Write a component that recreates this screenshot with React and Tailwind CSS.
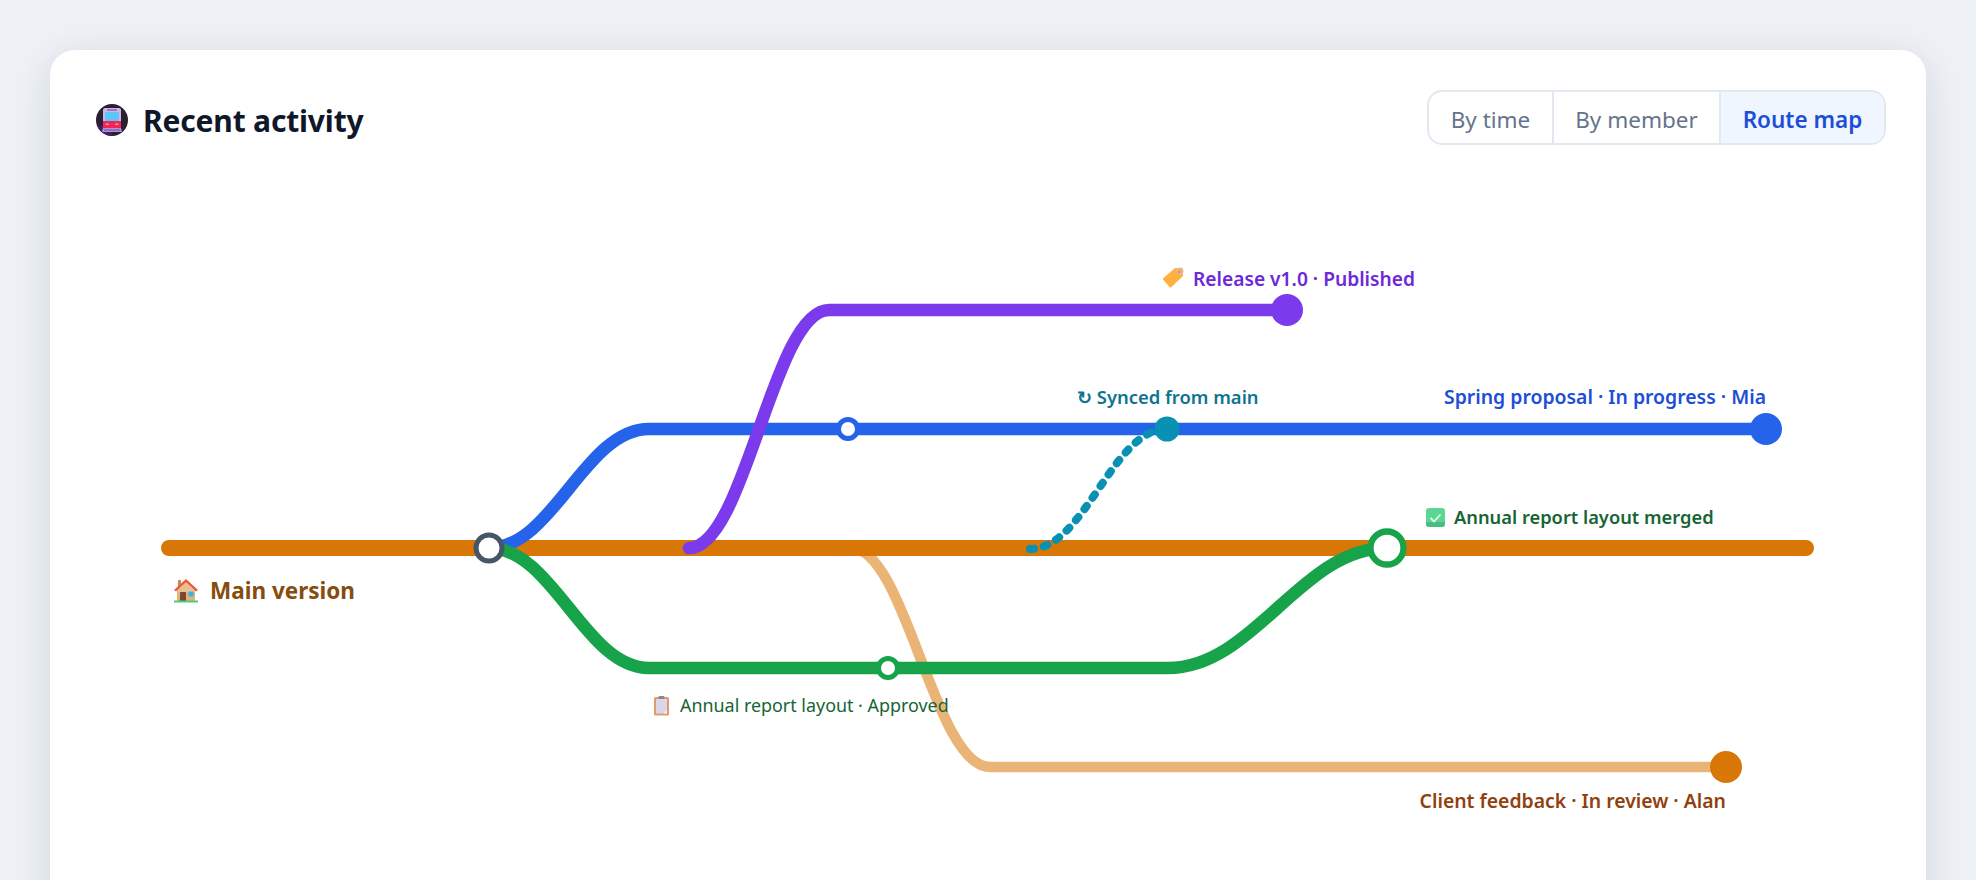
import { useState } from 'react'

const FONT = "font-['Noto_Sans',sans-serif]"

// Route geometry is in page pixels; the svg viewBox starts where the chart sits.
const routes = [
  { d: 'M169 548 H1806', cls: 'stroke-[#d97706]', w: 16 },
  { d: 'M851 548 C906 548 934 767 990 767 H1726', cls: 'stroke-[#d97706]', w: 10.5, op: 0.55 },
  { d: 'M489 548 C553 548 585 429 649 429 H1766', cls: 'stroke-[#2563eb]', w: 12.6 },
  { d: 'M489 548 C553 548 585 668 649 668 H1168 C1254 668 1301 548 1387 548', cls: 'stroke-[#16a34a]', w: 12.6 },
  { d: 'M689 548 C745 548 773 310 829 310 H1287', cls: 'stroke-[#7c3aed]', w: 12.6 },
  { d: 'M1030 549 C1085 549 1112 429 1167 429', cls: 'stroke-[#0891b2]', w: 8, dash: '4 10' },
]

const dots = [
  { x: 1287, y: 310, r: 16, cls: 'fill-[#7c3aed]' },
  { x: 1766, y: 429, r: 16, cls: 'fill-[#2563eb]' },
  { x: 1726, y: 767, r: 16, cls: 'fill-[#d97706]' },
  { x: 1167, y: 429, r: 12.6, cls: 'fill-[#0891b2]' },
]

const rings = [
  { x: 489, y: 548, r: 13, w: 5, cls: 'stroke-[#475569]' },
  { x: 848, y: 429, r: 9.5, w: 5, cls: 'stroke-[#2563eb]' },
  { x: 888, y: 668, r: 9.5, w: 5, cls: 'stroke-[#16a34a]' },
  { x: 1387, y: 548, r: 16.5, w: 6.3, cls: 'stroke-[#16a34a]' },
]

const labels = [
  { x: 210, y: 598.5, text: 'Main version', cls: 'text-[22.5px] font-bold fill-[#854d0e]' },
  { x: 1193, y: 285.5, text: 'Release v1.0 · Published', cls: 'text-[19.2px] font-semibold fill-[#6d28d9]' },
  { x: 1077, y: 404, text: '↻ Synced from main', cls: 'text-[18.4px] font-semibold fill-[#0e7490]' },
  { x: 1766, y: 404, text: 'Spring proposal · In progress · Mia', cls: 'text-[19.4px] font-semibold fill-[#1d4ed8]', end: true },
  { x: 1454, y: 524, text: 'Annual report layout merged', cls: 'text-[18.3px] font-semibold fill-[#166534]' },
  { x: 680, y: 711.5, text: 'Annual report layout · Approved', cls: 'text-[17.9px] fill-[#166534]' },
  { x: 1726, y: 807.5, text: 'Client feedback · In review · Alan', cls: 'text-[19.4px] font-semibold fill-[#92400e]', end: true },
]

function TrainIcon() {
  return (
    <svg viewBox="0 0 32 32" className="w-8 h-8 shrink-0">
      <circle cx="16" cy="16" r="16" fill="#2a2030" />
      <path d="M0 16a16 16 0 0 0 16 16V22H1z" fill="#4a1f73" opacity="0.8" />
      <rect x="7" y="4" width="18" height="15" rx="2" fill="#cdb4ec" />
      <rect x="11" y="5.5" width="10" height="1" fill="#5c4a72" />
      <rect x="9" y="8" width="14" height="9.5" rx="1.5" fill="#5bc6f5" />
      <rect x="7" y="17" width="18" height="7" fill="#f0245f" />
      <rect x="9.5" y="19.5" width="3.5" height="1.6" rx="0.8" fill="#ffb02e" />
      <rect x="19" y="19.5" width="3.5" height="1.6" rx="0.8" fill="#ffb02e" />
      <path d="M7 24h18l1 4H6z" fill="#b48fdc" />
      <rect x="8" y="25.5" width="16" height="1" fill="#6d5a85" />
    </svg>
  )
}

function HouseEmoji({ x, y }) {
  return (
    <g transform={`translate(${x} ${y})`}>
      <rect x="3" y="10" width="18" height="14" fill="#e3b27c" />
      <rect x="4" y="2" width="3" height="7" fill="#c98a55" />
      <path d="M12 1 L24 12 L22 13.5 L12 4.5 L2 13.5 L0 12 Z" fill="#ea5b3a" />
      <path d="M12 4.5 L21 12.5 V14 H3 V12.5 Z" fill="#eac092" />
      <rect x="6" y="14" width="6" height="9.5" rx="1" fill="#7d4533" />
      <rect x="14.5" y="13.5" width="5" height="5" fill="#37b4f0" />
      <rect x="0" y="22.5" width="24" height="2" fill="#4ccc77" />
    </g>
  )
}

function TagEmoji({ x, y }) {
  return (
    <g transform={`translate(${x} ${y})`}>
      <path d="M13 1 L20 1 Q21 1 21 2 L21 9 L9.5 20 Q8.5 21 7.5 20 L1 12.5 Q0.5 11.5 1.5 11 Z" fill="#ffb13d" />
      <circle cx="16.5" cy="5.5" r="2" fill="#f8857d" />
      <circle cx="18" cy="4" r="3.2" fill="none" stroke="#cfc6e0" strokeWidth="1" />
    </g>
  )
}

function CheckEmoji({ x, y }) {
  return (
    <g transform={`translate(${x} ${y})`}>
      <rect x="0" y="0" width="19" height="19" rx="3" fill="#5bd693" />
      <path d="M0 14 V16 Q0 19 3 19 H16 Q19 19 19 16 V14 Z" fill="#3fae72" opacity="0.6" />
      <path d="M4.5 10 L8 13.5 L14.5 6.5" fill="none" stroke="#eafaf1" strokeWidth="1.8" />
    </g>
  )
}

function ClipboardEmoji({ x, y }) {
  return (
    <g transform={`translate(${x} ${y})`}>
      <rect x="0" y="1" width="15" height="18.5" rx="1.5" fill="#e09a6c" />
      <rect x="2" y="3" width="11" height="14.5" fill="#dcd7e8" />
      <rect x="4.5" y="0" width="6" height="3" rx="1" fill="#8a8494" />
      <path d="M9.5 17.5 L13 14 V17.5 Z" fill="#f4f1f8" />
    </g>
  )
}

function RouteMap() {
  return (
    <svg viewBox="50 145 1876 735" className="block w-[1876px] h-[735px]" fill="none">
      {routes.map((r) => (
        <path
          key={r.d}
          d={r.d}
          className={r.cls}
          strokeWidth={r.w}
          strokeLinecap="round"
          strokeLinejoin="round"
          strokeOpacity={r.op}
          strokeDasharray={r.dash}
        />
      ))}
      {dots.map((c) => (
        <circle key={c.x} cx={c.x} cy={c.y} r={c.r} className={c.cls} />
      ))}
      {rings.map((c) => (
        <circle key={c.x} cx={c.x} cy={c.y} r={c.r} strokeWidth={c.w} className={`fill-white ${c.cls}`} />
      ))}
      <HouseEmoji x={174} y={578} />
      <TagEmoji x={1162} y={267} />
      <CheckEmoji x={1426} y={508} />
      <ClipboardEmoji x={654} y={696} />
      {labels.map((l) => (
        <text key={l.text} x={l.x} y={l.y} textAnchor={l.end ? 'end' : 'start'} className={l.cls}>
          {l.text}
        </text>
      ))}
    </svg>
  )
}

export default function App() {
  const [view, setView] = useState('Route map')
  const tabs = [
    { name: 'By time', w: 'w-[125px]' },
    { name: 'By member', w: 'w-[167px]' },
    { name: 'Route map', w: 'w-[163px]' },
  ]

  return (
    <div className={`h-screen overflow-hidden bg-[#eef2f7] pt-[50px] px-[50px] ${FONT}`}>
      <div className="h-[900px] bg-white rounded-[25px] shadow-[0_8px_40px_rgba(15,23,42,0.12)]">
        <header className="flex items-center justify-between pl-[46px] pr-[40px] pt-[40px]">
          <div className="flex items-center gap-[15px] pt-[5px]">
            <TrainIcon />
            <h1 className="pt-[1px] text-[30px] leading-[45px] font-bold tracking-[-0.17px] text-[#0f172a]">Recent activity</h1>
          </div>
          <div className="flex h-[55px] rounded-[15px] border-2 border-[#e2e8f0] overflow-hidden">
            {tabs.map((t, i) => (
              <button
                key={t.name}
                onClick={() => setView(t.name)}
                className={`${t.w} pt-[4px] text-[22.5px] ${i < 2 ? 'border-r-2 border-[#e2e8f0]' : ''} ${
                  view === t.name ? 'bg-[#eff6ff] text-[#1d4ed8] font-semibold' : 'text-[#64748b]'
                }`}
              >
                {t.name}
              </button>
            ))}
          </div>
        </header>
        <RouteMap />
      </div>
    </div>
  )
}
